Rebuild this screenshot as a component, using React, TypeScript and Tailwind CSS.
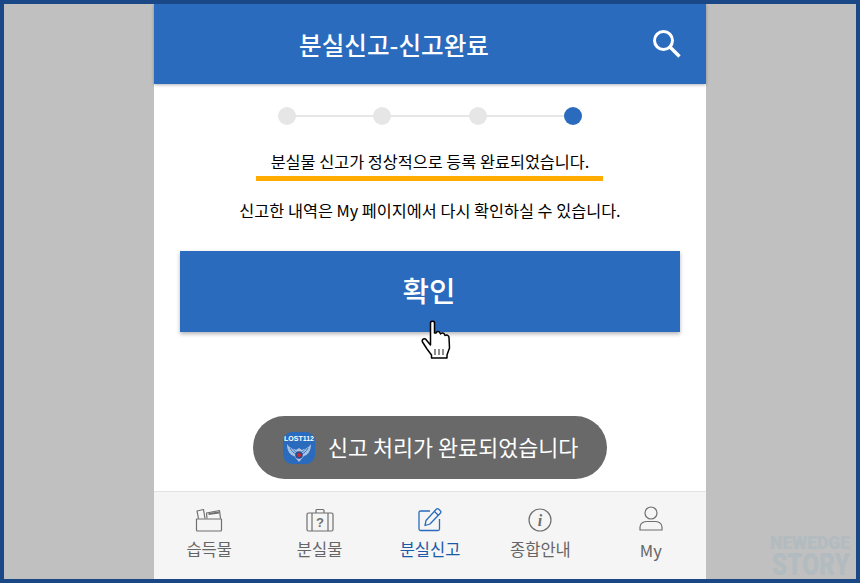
const font = '"Noto Sans CJK KR", "Noto Sans", sans-serif';

function Search() {
  return (
    <svg width="30" height="30" viewBox="0 0 30 30" fill="none" stroke="#fff" strokeWidth="3">
      <circle cx="11.5" cy="11.5" r="9" />
      <path d="M18 18 L27.5 27.5" strokeWidth="3.4" />
    </svg>
  );
}

function Cursor() {
  return (
    <svg width="32" height="40" viewBox="0 0 32 40">
      <path
        d="M9.5 3 C9.5 0.8 13.5 0.8 13.5 3 L13.5 13 L15 13 C15.5 11 18.5 11 19 13 L19.5 14 C20 12.5 23 12.5 23.5 14.5 L24 15.5 C25 14.5 28 15 28 17.5 L28.5 28 L26 35 L26 38 L10.5 38 L10.5 35 L6 29 L1.5 22 C0.5 20 2.5 18 4.5 19 L9.5 25 Z"
        fill="#fff"
        stroke="#000"
        strokeWidth="1.5"
        strokeLinejoin="round"
      />
      <path d="M14 29 V35 M18 29 V35 M22 29 V35" stroke="#000" strokeWidth="0.9" />
    </svg>
  );
}

function AppLogo() {
  return (
    <div className="relative w-[32px] h-[32px] rounded-[9px] bg-[#2a6bbd] overflow-hidden flex flex-col items-center">
      <span className="text-[7px] leading-[8px] mt-[3px] font-bold text-white" style={{ fontFamily: '"Liberation Sans", sans-serif' }}>
        LOST112
      </span>
      <svg width="30" height="20" viewBox="0 0 30 20">
        <path d="M3 1 C6 6 9 5 12 7 L15 5 L18 7 C21 5 24 6 27 1 C27 8 24 12 20 13 L15 19 L10 13 C6 12 3 8 3 1 Z" fill="#a9c2e2" />
        <path d="M6 5 C8 9 10 10 12 11 M8 4.5 C9.5 7.5 11 8.5 12.5 9 M24 5 C22 9 20 10 18 11 M22 4.5 C20.5 7.5 19 8.5 17.5 9" stroke="#2a6bbd" strokeWidth="0.9" fill="none" />
        <circle cx="15" cy="12" r="3.8" fill="#24508f" />
        <circle cx="15" cy="12" r="2" fill="#d8232f" />
      </svg>
    </div>
  );
}

function Box() {
  return (
    <svg width="28" height="24" viewBox="0 0 28 24" fill="none" stroke="#6f6f6f" strokeWidth="1.2" strokeLinejoin="round">
      <path d="M1.5 11 H26.5 V22 a1 1 0 0 1 -1 1 H2.5 a1 1 0 0 1 -1 -1 Z" />
      <path d="M3.5 10.5 L2 3 L8.5 1.5 L10 10.5" />
      <path d="M12 10.5 L11.5 5 L24.5 2.5 L25.5 10.5" />
      <path d="M13.5 5 L24 3.5 L24.3 5.5 L13.5 7" fill="#6f6f6f" stroke="none" />
    </svg>
  );
}

function Bag() {
  return (
    <svg width="28" height="24" viewBox="0 0 28 24" fill="none" stroke="#6f6f6f" strokeWidth="1.2">
      <rect x="1" y="5" width="26" height="18" rx="1.5" />
      <path d="M6 5 V23 M22 5 V23" />
      <path d="M10 5 V2.5 a1 1 0 0 1 1 -1 H17 a1 1 0 0 1 1 1 V5" />
      <text x="14" y="19" fontSize="13" fontWeight="700" textAnchor="middle" fill="#6f6f6f" stroke="none" fontFamily="Liberation Sans, sans-serif">?</text>
    </svg>
  );
}

function Edit() {
  return (
    <svg width="24" height="25" viewBox="0 0 24 25" fill="none" stroke="#2a6bbd" strokeWidth="1.3" strokeLinejoin="round">
      <path d="M12 4 H2.5 a1.5 1.5 0 0 0 -1.5 1.5 V22 a1.5 1.5 0 0 0 1.5 1.5 H20 a1.5 1.5 0 0 0 1.5 -1.5 V12" />
      <path d="M8 13.5 L18.5 2 a1.4 1.4 0 0 1 2 0 L22.5 4 a1.4 1.4 0 0 1 0 2 L12 17 L7 18.5 Z" />
      <path d="M16.5 4.5 L20.5 8.5" />
    </svg>
  );
}

function Info() {
  return (
    <svg width="24" height="24" viewBox="0 0 24 24" fill="none" stroke="#6f6f6f" strokeWidth="1.2">
      <circle cx="12" cy="12" r="11" />
      <text x="12" y="18" fontSize="16" fontWeight="700" fontStyle="italic" textAnchor="middle" fill="#6f6f6f" stroke="none" fontFamily="Liberation Serif, serif">i</text>
    </svg>
  );
}

function User() {
  return (
    <svg width="24" height="25" viewBox="0 0 24 25" fill="none" stroke="#6f6f6f" strokeWidth="1.2">
      <circle cx="12" cy="7" r="6" />
      <path d="M1 24 V21 C1 17 5 15.5 8 15.5 H16 C19 15.5 23 17 23 21 V24 Z" />
    </svg>
  );
}

function NavItem({ icon, label, active, up }: { icon: React.ReactNode; label: string; active?: boolean; up?: boolean }) {
  return (
    <div className="flex-1 flex flex-col items-center">
      <div className={`h-[26px] flex items-end ${up ? "mt-[13px]" : "mt-[14px]"}`}>{icon}</div>
      <span className={`text-[16.5px] leading-[22px] ${up ? "mt-[8px]" : "mt-[6px]"} ${active ? "text-[#1a5aa6]" : "text-[#666]"}`}>
        {label}
      </span>
    </div>
  );
}

export default function App() {
  const steps = [false, false, false, true];
  return (
    <div className="w-[860px] h-[583px] border-4 border-[#1a4785] bg-[#c0c0c0] flex justify-center relative overflow-hidden" style={{ fontFamily: font }}>
      <div className="w-[552px] flex flex-col bg-white relative">
        <header className="h-[80px] shrink-0 bg-[#2a6bbd] shadow-[0_1px_3px_rgba(0,0,0,0.3)] flex items-center justify-center pr-[72px] relative">
          <h1 className="text-[24.6px] text-white font-medium">분실신고-신고완료</h1>
          <div className="absolute right-[24px] top-[25px]">
            <Search />
          </div>
        </header>

        <main className="flex-1 flex flex-col items-center relative">
          <div className="mt-[23px] w-[304px] flex justify-between items-center relative">
            <div className="absolute left-[8px] right-[8px] top-[8px] h-[2px] bg-[#e6e6e6]" />
            {steps.map((a, i) => (
              <div key={i} className={`relative w-[18px] h-[18px] rounded-full ${a ? "bg-[#2a6bbd]" : "bg-[#e6e6e6]"}`} />
            ))}
          </div>

          <p className="mt-[25px] w-[347px] mr-[2px] pl-[2px] h-[31px] border-b-[5px] border-[#ffab00] text-center text-[16.3px] leading-[22px] text-black">
            분실물 신고가 정상적으로 등록 완료되었습니다.
          </p>
          <p className="mt-[17px] text-[16.3px] leading-[24px] text-black">
            신고한 내역은 My 페이지에서 다시 확인하실 수 있습니다.
          </p>

          <button className="mt-[29px] w-[500px] h-[81px] pb-[3px] pr-[2px] bg-[#2a6bbd] text-white text-[28.8px] font-medium shadow-[0_2px_4px_rgba(0,0,0,0.3)]">
            확인
          </button>

          <div className="absolute left-[267px] top-[236px]">
            <Cursor />
          </div>

          <div className="absolute left-[99px] top-[332px] w-[354px] h-[63px] rounded-full bg-[#696969] flex items-center pl-[30px] gap-[13px]">
            <AppLogo />
            <span className="text-[21.8px] text-white">신고 처리가 완료되었습니다</span>
          </div>
        </main>

        <nav className="h-[88px] shrink-0 bg-[#f5f5f5] border-t border-[#e2e2e2] flex">
          <NavItem icon={<Box />} label="습득물" />
          <NavItem icon={<Bag />} label="분실물" />
          <NavItem icon={<Edit />} label="분실신고" active />
          <NavItem icon={<Info />} label="종합안내" />
          <NavItem icon={<User />} label="My" up />
        </nav>
      </div>

      <div className="absolute right-[6px] bottom-[1px] flex flex-col items-end text-[#b2bbbf]" style={{ fontFamily: 'Roboto, sans-serif' }}>
        <span className="text-[19px] leading-[18px] font-black scale-x-[0.92] origin-right">NEWEDGE</span>
        <span className="text-[31px] leading-[26px] font-black scale-x-[0.79] origin-right">STORY</span>
      </div>
    </div>
  );
}
